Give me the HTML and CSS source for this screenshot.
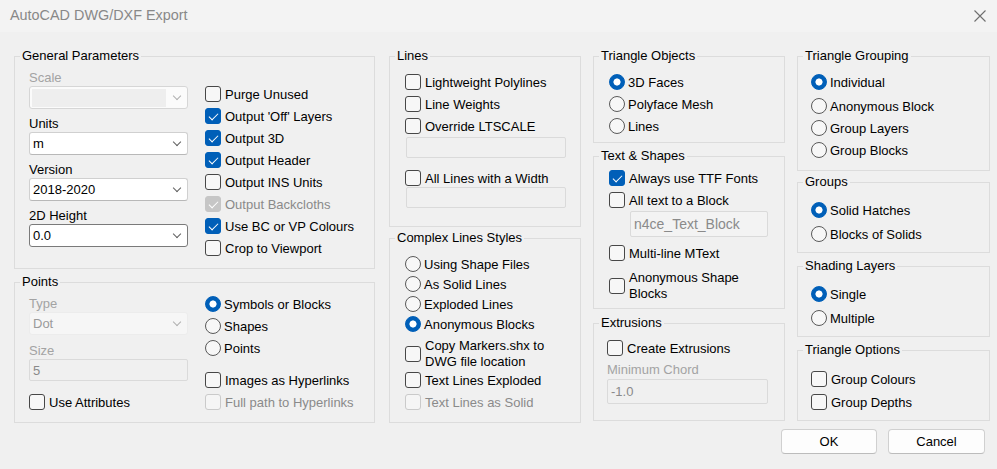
FILE: index.html
```html
<!DOCTYPE html>
<html>
<head>
<meta charset="utf-8">
<title>AutoCAD DWG/DXF Export</title>
<link rel="stylesheet" href="styles.css">
</head>
<body>
<div class="titlebar">
  <span class="title">AutoCAD DWG/DXF Export</span>
  <svg class="close" viewBox="0 0 12 12"><path d="M0.5 0.5L11.5 11.5M11.5 0.5L0.5 11.5" stroke="#6e6e6e" stroke-width="1.1" fill="none"/></svg>
</div>
<div class="main">
  <div class="col">
    <fieldset class="grp h-gen">
      <legend>General Parameters</legend>
      <div class="two">
        <div class="fields pt6">
          <div class="lbl ldis">Scale</div>
          <div class="combo cdis"><span class="inner"></span></div>
          <div class="lbl mt7">Units</div>
          <div class="combo"><span>m</span></div>
          <div class="lbl mt7">Version</div>
          <div class="combo"><span>2018-2020</span></div>
          <div class="lbl mt7">2D Height</div>
          <div class="combo focus"><span>0.0</span></div>
        </div>
        <div class="checks pt19">
          <div class="row"><span class="cb"></span>Purge Unused</div>
          <div class="row"><span class="cb on"></span>Output 'Off' Layers</div>
          <div class="row"><span class="cb on"></span>Output 3D</div>
          <div class="row"><span class="cb on"></span>Output Header</div>
          <div class="row"><span class="cb"></span>Output INS Units</div>
          <div class="row tdis"><span class="cb on dis"></span>Output Backcloths</div>
          <div class="row"><span class="cb on"></span>Use BC or VP Colours</div>
          <div class="row"><span class="cb"></span>Crop to Viewport</div>
        </div>
      </div>
    </fieldset>
    <fieldset class="grp h-pts mt5">
      <legend>Points</legend>
      <div class="two">
        <div class="fields pt6">
          <div class="lbl ldis">Type</div>
          <div class="combo cdis2"><span>Dot</span></div>
          <div class="lbl ldis mt8">Size</div>
          <div class="tb"><span>5</span></div>
          <div class="row mt10"><span class="cb"></span>Use Attributes</div>
        </div>
        <div class="checks pt3">
          <div class="row"><span class="rb on"></span>Symbols or Blocks</div>
          <div class="row"><span class="rb"></span>Shapes</div>
          <div class="row"><span class="rb"></span>Points</div>
          <div class="row mt10"><span class="cb"></span>Images as Hyperlinks</div>
          <div class="row tdis"><span class="cb dis"></span>Full path to Hyperlinks</div>
        </div>
      </div>
    </fieldset>
  </div>

  <div class="col c2">
    <fieldset class="grp h-lines">
      <legend>Lines</legend>
      <div class="body pl15 pt7">
        <div class="row"><span class="cb"></span>Lightweight Polylines</div>
        <div class="row"><span class="cb"></span>Line Weights</div>
        <div class="row"><span class="cb"></span>Override LTSCALE</div>
        <div class="tb tb-lines h21"></div>
        <div class="row r20 mt10"><span class="cb"></span>All Lines with a Width</div>
        <div class="tb tb-lines h21 mtm1"></div>
      </div>
    </fieldset>
    <fieldset class="grp h-complex mt3">
      <legend>Complex Lines Styles</legend>
      <div class="body pl15 pt8">
        <div class="row r20"><span class="rb"></span>Using Shape Files</div>
        <div class="row r20"><span class="rb"></span>As Solid Lines</div>
        <div class="row r20"><span class="rb"></span>Exploded Lines</div>
        <div class="row r20"><span class="rb on"></span>Anonymous Blocks</div>
        <div class="row multi mt4"><span class="cb"></span><span>Copy Markers.shx to<br>DWG file location</span></div>
        <div class="row mtm1"><span class="cb"></span>Text Lines Exploded</div>
        <div class="row tdis"><span class="cb dis"></span>Text Lines as Solid</div>
      </div>
    </fieldset>
  </div>

  <div class="col">
    <fieldset class="grp h-tri">
      <legend>Triangle Objects</legend>
      <div class="body pl15 pt7">
        <div class="row"><span class="rb on"></span>3D Faces</div>
        <div class="row"><span class="rb"></span>Polyface Mesh</div>
        <div class="row"><span class="rb"></span>Lines</div>
      </div>
    </fieldset>
    <fieldset class="grp h-text mt5">
      <legend>Text &amp; Shapes</legend>
      <div class="body pl15 pt3">
        <div class="row"><span class="cb on"></span>Always use TTF Fonts</div>
        <div class="row"><span class="cb"></span>All text to a Block</div>
        <div class="tb tb-block"><span>n4ce_Text_Block</span></div>
        <div class="row mt5"><span class="cb"></span>Multi-line MText</div>
        <div class="row multi mt6"><span class="cb"></span><span>Anonymous Shape<br>Blocks</span></div>
      </div>
    </fieldset>
    <fieldset class="grp h-ext mt6">
      <legend>Extrusions</legend>
      <div class="body pl13 pt6">
        <div class="row"><span class="cb"></span>Create Extrusions</div>
        <div class="lbl ldis mt3">Minimum Chord</div>
        <div class="tb tb-chord mt1"><span>-1.0</span></div>
      </div>
    </fieldset>
  </div>

  <div class="col">
    <fieldset class="grp h-tg">
      <legend>Triangle Grouping</legend>
      <div class="body pl13 pt7">
        <div class="row mb2"><span class="rb on"></span>Individual</div>
        <div class="row"><span class="rb"></span>Anonymous Block</div>
        <div class="row"><span class="rb"></span>Group Layers</div>
        <div class="row"><span class="rb"></span>Group Blocks</div>
      </div>
    </fieldset>
    <fieldset class="grp h-small mt3">
      <legend>Groups</legend>
      <div class="body pl13 pt9">
        <div class="row mb2"><span class="rb on"></span>Solid Hatches</div>
        <div class="row"><span class="rb"></span>Blocks of Solids</div>
      </div>
    </fieldset>
    <fieldset class="grp h-small mt5">
      <legend>Shading Layers</legend>
      <div class="body pl13 pt9">
        <div class="row mb2"><span class="rb on"></span>Single</div>
        <div class="row"><span class="rb"></span>Multiple</div>
      </div>
    </fieldset>
    <fieldset class="grp h-small mt5">
      <legend>Triangle Options</legend>
      <div class="body pl13 pt10">
        <div class="row mb1"><span class="cb"></span>Group Colours</div>
        <div class="row"><span class="cb"></span>Group Depths</div>
      </div>
    </fieldset>
  </div>
</div>
<div class="buttons">
  <button class="btn ok">OK</button>
  <button class="btn cancel">Cancel</button>
</div>
</body>
</html>
```

FILE: styles.css
```css
* { box-sizing: border-box; }

body {
  margin: 0;
  width: 997px;
  height: 469px;
  overflow: hidden;
  background: #f0f0f0;
  font-family: "Liberation Sans", Arial, sans-serif;
  font-size: 13px;
  color: #000;
}

.titlebar {
  height: 32px;
  display: flex;
  align-items: center;
  justify-content: space-between;
  padding: 0 11px 2px 10px;
  background: #f3f3f3;
}
.title { font-size: 14.4px; color: #888888; }
.close { width: 12px; height: 12px; margin-top: 1px; }

.main {
  display: flex;
  padding: 16px 0 0 14px;
  column-gap: 12px;
}
.col { display: flex; flex-direction: column; }
.col:nth-child(1) { width: 361px; }
.col:nth-child(2) { width: 192px; margin-left: 2px; }
.col:nth-child(3) { width: 192px; }
.col:nth-child(4) { width: 193px; }

.grp {
  margin: 0;
  padding: 0;
  min-width: 0;
  border: 1px solid #dcdcdc;
  flex: none;
}
legend {
  margin-left: 5px;
  padding: 0 2px;
  line-height: 16px;
  font-size: 13px;
}

.h-gen { height: 221px; }
.h-pts { height: 149px; }
.h-lines { height: 179px; }
.h-complex { height: 193px; }
.h-tri { height: 95px; }
.h-text { height: 161px; }
.h-ext { height: 106px; }
.h-tg { height: 123px; }
.h-small { height: 79px; }

.two { display: flex; padding-left: 14px; }
.fields { width: 159px; display: flex; flex-direction: column; }
.checks { margin-left: 17px; display: flex; flex-direction: column; }

.pt3 { padding-top: 3px; }
.pt6 { padding-top: 6px; }
.pt7 { padding-top: 7px; }
.pt8 { padding-top: 8px; }
.pt9 { padding-top: 9px; }
.pt10 { padding-top: 10px; }
.pt19 { padding-top: 19px; }
.pl13 { padding-left: 13px; }
.pl15 { padding-left: 15px; }

.body { display: flex; flex-direction: column; }

.lbl { height: 16px; line-height: 16px; }
.ldis { color: #a3a3a3; }

.combo {
  height: 23px;
  display: flex;
  align-items: center;
  padding-left: 3px;
  background: #fff;
  border: 1px solid #d0d0d0;
  border-bottom-color: #b8b8b8;
  border-radius: 3px;
}
.combo::after {
  content: "";
  width: 5px;
  height: 5px;
  margin-left: auto;
  margin-right: 7px;
  margin-top: -4px;
  border-right: 1px solid #606060;
  border-bottom: 1px solid #606060;
  transform: rotate(45deg);
}
.combo.focus { border-color: #7a7a7a; }
.combo.cdis { background: #fbfbfb; border-color: #d6d6d6; padding-left: 2px; }
.combo.cdis .inner { width: 134px; height: 18px; background: #eeeeee; }
.combo.cdis::after, .combo.cdis2::after { border-color: #b0b0b0; }
.combo.cdis2 { background: #f6f6f6; border-color: #ececec; color: #9a9a9a; }

.tb {
  height: 22px;
  display: flex;
  align-items: center;
  padding-left: 3px;
  border: 1px solid #dadada;
  border-radius: 2px;
  background: #f0f0f0;
  color: #8a8a8a;
}
.h21 { height: 21px; }
.tb-lines { width: 160px; margin-left: 1px; }
.tb-block { width: 138px; height: 26px; margin-left: 21px; background: #f3f3f3; font-size: 14px; }
.tb-chord { width: 161px; height: 25px; }

.row {
  display: flex;
  align-items: center;
  height: 22px;
  white-space: nowrap;
}
.row.r20 { height: 20px; }
.row.multi { height: 32px; line-height: 16px; }
.tdis { color: #8a8a8a; }

.cb, .rb {
  flex: none;
  width: 16px;
  height: 16px;
  display: flex;
  align-items: center;
  justify-content: center;
  border: 1px solid #474747;
  background: #f7f7f7;
}
.cb { border-radius: 3px; margin-right: 4px; }
.cb.on { background: #005fb8; border-color: #005fb8; }
.cb.on::after {
  content: "";
  width: 8px;
  height: 4px;
  margin-top: -2px;
  border-left: 1px solid #fff;
  border-bottom: 1px solid #fff;
  transform: rotate(-45deg);
}
.cb.dis { border-color: #cacaca; background: #f5f5f5; }
.cb.dis.on { background: #c6c6c6; border-color: #c6c6c6; }

.rb { border-radius: 50%; border-color: #595959; margin-right: 3px; }
.rb.on {
  border-color: #005fb8;
  background: radial-gradient(circle, #fff 0 3.2px, #005fb8 3.9px);
}

.buttons {
  display: flex;
  justify-content: flex-end;
  column-gap: 11px;
  padding-right: 12px;
  margin-top: 6px;
}
.btn {
  height: 25px;
  border: 1px solid #d0d0d0;
  border-bottom-color: #bcbcbc;
  border-radius: 4px;
  background: #fdfdfd;
  font-family: "Liberation Sans", Arial, sans-serif;
  font-size: 13px;
  color: #000;
  padding: 0;
}
.ok { width: 96px; }
.cancel { width: 97px; }

/* spacing utilities (after component rules so they win) */
.mt1 { margin-top: 1px; }
.mt3 { margin-top: 3px; }
.mt4 { margin-top: 4px; }
.mt5 { margin-top: 5px; }
.mt6 { margin-top: 6px; }
.mt7 { margin-top: 7px; }
.mt8 { margin-top: 8px; }
.mt10 { margin-top: 10px; }
.mtm1 { margin-top: -1px; }
.mb1 { margin-bottom: 1px; }
.mb2 { margin-bottom: 2px; }
```
